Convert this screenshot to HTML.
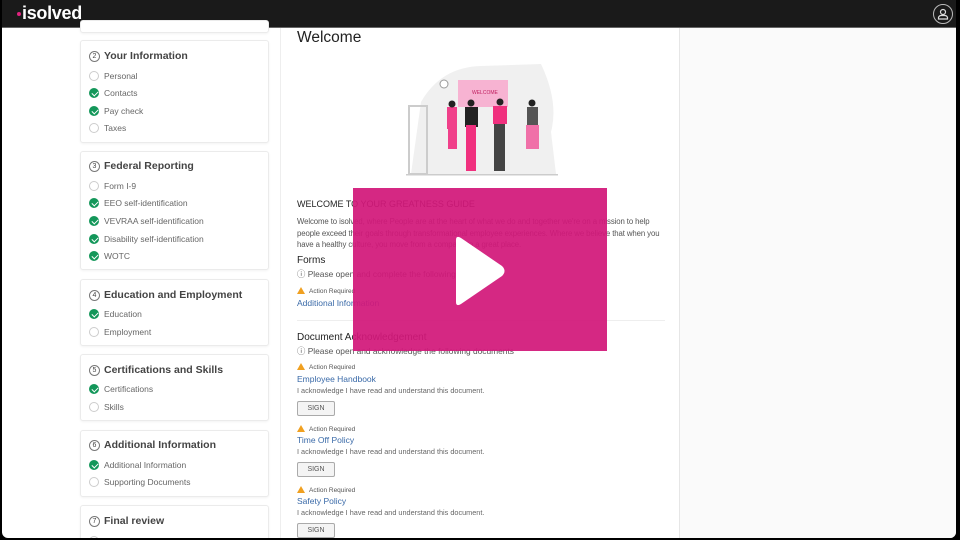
<!DOCTYPE html>
<html><head><meta charset="utf-8"><style>
*{margin:0;padding:0;box-sizing:border-box}
body{width:960px;height:540px;overflow:hidden;background:#000;font-family:"Liberation Sans",Arial,sans-serif;position:relative}
.app{position:absolute;left:2px;top:0;width:954px;height:538px;background:#fff;overflow:hidden;border-radius:0 0 6px 6px}
.top{position:absolute;left:0;top:0;width:954px;height:28px;background:#1a1a1a;border-bottom:1px solid #666}
.logo{position:absolute;left:15px;top:3px;color:#fff;font-weight:bold;font-size:18px;letter-spacing:-0.3px}
.logo b{display:inline-block;width:4px;height:4px;background:#e0227e;border-radius:50%;margin-right:1px;vertical-align:middle}
.user{position:absolute;left:931px;top:4px;width:20px;height:20px;border:1px solid #bbb;border-radius:50%}
.card{position:absolute;left:78px;width:189px;background:#fff;border:1px solid #ebebeb;border-radius:3px;box-shadow:0 1px 2px rgba(0,0,0,.05)}
.h{position:absolute;left:8px;font-size:10.5px;font-weight:bold;color:#444;white-space:nowrap;display:flex;align-items:center;height:12px}
.n{display:inline-block;width:11px;height:11px;border:1px solid #777;border-radius:50%;font-size:7px;text-align:center;line-height:9px;font-weight:normal;margin-right:4px}
.it{position:absolute;left:8px;font-size:8.5px;color:#666;white-space:nowrap;display:flex;align-items:center;height:11px}
.c{display:inline-block;width:10px;height:10px;border-radius:50%;border:1px solid #ccc;margin-right:5px;position:relative;flex:none}
.c.g{background:#14975a;border-color:#14975a}
.c.g:after{content:"";position:absolute;left:2.5px;top:1px;width:3px;height:5px;border:solid #fff;border-width:0 1.5px 1.5px 0;transform:rotate(45deg)}
.main{position:absolute;left:278px;top:28px;width:400px;height:512px;background:#fff;border-left:1px solid #eee;border-right:1px solid #e6e6e6}
.right{position:absolute;left:678px;top:28px;width:276px;height:512px;background:#fafafa}
.t{position:absolute;white-space:nowrap;color:#444}
.link{color:#3a6aa8;font-size:8.5px}
.sign{position:absolute;left:16px;width:38px;height:15px;border:1px solid #aaa;border-radius:2px;background:#f4f4f4;font-size:7px;color:#555;text-align:center;line-height:13px}
.warn{display:inline-block;width:0;height:0;border-left:4px solid transparent;border-right:4px solid transparent;border-bottom:7px solid #f0a020;margin-right:4px;vertical-align:-1px}
.ar{font-size:6.5px;color:#555}
.play{position:absolute;left:353px;top:188px;width:254px;height:163px;background:rgba(210,24,122,.93)}
</style></head><body>
<div class="app">
<div class="top"><div class="logo"><b></b>isolved</div>
<div class="user"><svg width="18" height="18" viewBox="0 0 18 18"><circle cx="9" cy="7" r="2.5" fill="none" stroke="#ddd" stroke-width="1.2"/><path d="M4.5 14v-1.5a3 3 0 0 1 3-2h3a3 3 0 0 1 3 2V14z" fill="none" stroke="#ddd" stroke-width="1.2"/></svg></div></div>

<div class="card" style="top:20px;height:13px"></div>
<div class="card" style="top:40px;height:103px">
<div class="h" style="top:9px"><span class="n">2</span>Your Information</div>
<div class="it" style="top:29px"><span class="c"></span>Personal</div>
<div class="it" style="top:46px"><span class="c g"></span>Contacts</div>
<div class="it" style="top:64px"><span class="c g"></span>Pay check</div>
<div class="it" style="top:81px"><span class="c"></span>Taxes</div></div>
<div class="card" style="top:151px;height:119px">
<div class="h" style="top:8px"><span class="n">3</span>Federal Reporting</div>
<div class="it" style="top:28px"><span class="c"></span>Form I-9</div>
<div class="it" style="top:45px"><span class="c g"></span>EEO self-identification</div>
<div class="it" style="top:63px"><span class="c g"></span>VEVRAA self-identification</div>
<div class="it" style="top:81px"><span class="c g"></span>Disability self-identification</div>
<div class="it" style="top:98px"><span class="c g"></span>WOTC</div></div>
<div class="card" style="top:279px;height:67px">
<div class="h" style="top:9px"><span class="n">4</span>Education and Employment</div>
<div class="it" style="top:28px"><span class="c g"></span>Education</div>
<div class="it" style="top:46px"><span class="c"></span>Employment</div></div>
<div class="card" style="top:354px;height:67px">
<div class="h" style="top:9px"><span class="n">5</span>Certifications and Skills</div>
<div class="it" style="top:28px"><span class="c g"></span>Certifications</div>
<div class="it" style="top:46px"><span class="c"></span>Skills</div></div>
<div class="card" style="top:430px;height:67px">
<div class="h" style="top:8px"><span class="n">6</span>Additional Information</div>
<div class="it" style="top:28px"><span class="c g"></span>Additional Information</div>
<div class="it" style="top:45px"><span class="c"></span>Supporting Documents</div></div>
<div class="card" style="top:505px;height:50px">
<div class="h" style="top:9px"><span class="n">7</span>Final review</div>
<div class="it" style="top:29px"><span class="c"></span>Tasks to Complete</div></div>

<div class="right"></div>
<div class="main">
<div class="t" style="left:16px;top:1px;font-size:15.5px;color:#222">Welcome</div>
<svg style="position:absolute;left:120px;top:34px" width="160" height="116" viewBox="0 0 160 116">
<path d="M20 40 Q40 5 80 4 L140 2 Q158 40 150 70 L155 112 L10 112 Z" fill="#f0f0f0"/>
<rect x="57" y="18" width="50" height="27" fill="#f7b3d2"/>
<text x="71" y="32" font-size="5" fill="#c02060" font-family="Liberation Sans">WELCOME</text>
<circle cx="43" cy="22" r="4" fill="#fff" stroke="#999"/>
<rect x="8" y="44" width="18" height="68" fill="none" stroke="#ccc" stroke-width="2"/>
<rect x="46" y="45" width="10" height="22" fill="#f0408a"/><rect x="47" y="67" width="9" height="20" fill="#f0408a"/>
<circle cx="51" cy="42" r="3.5" fill="#222"/>
<rect x="64" y="45" width="13" height="20" fill="#222"/><rect x="65" y="63" width="10" height="46" fill="#f0307e"/>
<circle cx="70" cy="41" r="3.5" fill="#222"/>
<rect x="92" y="44" width="14" height="18" fill="#f0307e"/><rect x="93" y="62" width="11" height="47" fill="#444"/>
<circle cx="99" cy="40" r="3.5" fill="#222"/>
<rect x="126" y="45" width="11" height="18" fill="#555"/><rect x="125" y="63" width="13" height="24" fill="#f070a8"/>
<circle cx="131" cy="41" r="3.5" fill="#222"/>
<rect x="5" y="112" width="152" height="1.5" fill="#ccc"/>
</svg>
<div class="t" style="left:16px;top:171px;font-size:9px;color:#222">WELCOME TO YOUR GREATNESS GUIDE</div>
<div class="t" style="left:16px;top:188px;font-size:7.8px;line-height:11.5px;color:#555;letter-spacing:-0.1px">Welcome to isolved, where People are at the heart of what we do and together we're on a mission to help<br>people exceed their goals through transformational employee experiences. Where we believe that when you<br>have a healthy culture, you move from a company to a great place.</div>
<div class="t" style="left:16px;top:227px;font-size:10px;color:#222">Forms</div>
<div class="t" style="left:16px;top:240px;font-size:8.4px;color:#555">ⓘ Please open and complete the following forms</div>
<div class="t ar" style="left:16px;top:259px"><span class="warn"></span>Action Required</div>
<div class="t link" style="left:16px;top:270px">Additional Information</div>
<div style="position:absolute;left:16px;top:292px;width:368px;height:1px;background:#eee"></div>
<div class="t" style="left:16px;top:304px;font-size:10px;color:#222">Document Acknowledgement</div>
<div class="t" style="left:16px;top:317px;font-size:8.4px;color:#555">ⓘ Please open and acknowledge the following documents</div>

<div class="t ar" style="left:16px;top:335px"><span class="warn"></span>Action Required</div>
<div class="t link" style="left:16px;top:346px">Employee Handbook</div>
<div class="t" style="left:16px;top:358px;font-size:7.3px;color:#666">I acknowledge I have read and understand this document.</div>
<div class="sign" style="top:373px">SIGN</div>
<div class="t ar" style="left:16px;top:397px"><span class="warn"></span>Action Required</div>
<div class="t link" style="left:16px;top:407px">Time Off Policy</div>
<div class="t" style="left:16px;top:419px;font-size:7.3px;color:#666">I acknowledge I have read and understand this document.</div>
<div class="sign" style="top:434px">SIGN</div>
<div class="t ar" style="left:16px;top:458px"><span class="warn"></span>Action Required</div>
<div class="t link" style="left:16px;top:468px">Safety Policy</div>
<div class="t" style="left:16px;top:480px;font-size:7.3px;color:#666">I acknowledge I have read and understand this document.</div>
<div class="sign" style="top:495px">SIGN</div>
</div>
</div>
<div class="play"><svg style="position:absolute;left:97px;top:46px" width="60" height="75" viewBox="0 0 60 75"><path d="M6 6 Q6 1 11 4 L52 32 Q57 37 52 42 L11 70 Q6 73 6 68 Z" fill="#fff"/></svg></div>
</body></html>
